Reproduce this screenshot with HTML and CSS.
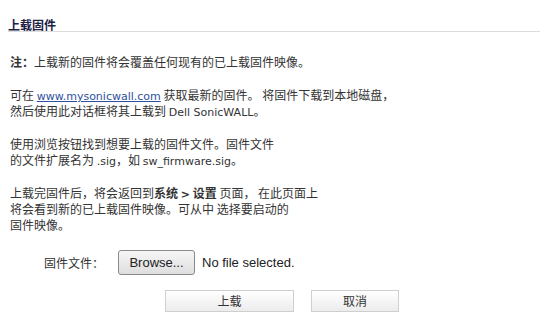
FILE: index.html
```html
<!DOCTYPE html>
<html>
<head>
<meta charset="utf-8">
<link rel="stylesheet" href="styles.css">
</head>
<body>
<div class="page">
  <div class="title">上载固件</div>
  <div class="content">
    <p class="para"><b>注：</b>上载新的固件将会覆盖任何现有的已上载固件映像。</p>
    <p class="para">可在 <a class="link en" href="#">www.mysonicwall.com</a> 获取最新的固件。 将固件下载到本地磁盘，<br>然后使用此对话框将其上载到 <span class="en">Dell SonicWALL</span>。</p>
    <p class="para">使用浏览按钮找到想要上载的固件文件。固件文件<br>的文件扩展名为 <span class="en">.sig</span>，如 <span class="en">sw_firmware.sig</span>。</p>
    <p class="para">上载完固件后，将会返回到<b>系统 <span class="en">&gt;</span> 设置</b> 页面， 在此页面上<br>将会看到新的已上载固件映像。可从中 选择要启动的<br>固件映像。</p>
  </div>
  <div class="file-row">
    <span class="file-label">固件文件：</span>
    <span class="browse">Browse...</span>
    <span class="nofile">No file selected.</span>
  </div>
  <div class="actions">
    <span class="btn btn-upload">上载</span>
    <span class="btn btn-cancel">取消</span>
  </div>
</div>
</body>
</html>
```
FILE: styles.css
```css
html, body {
  margin: 0;
  padding: 0;
  background: #fff;
}
body {
  font-family: "Noto Sans CJK SC", sans-serif;
  font-size: 12px;
  color: #333;
}
.en {
  font-family: "DejaVu Sans", sans-serif;
  font-size: 11px;
  line-height: 10px;
}
.page {
  padding: 18px 5px 0 8px;
}
.title {
  font-weight: bold;
  font-size: 12px;
  color: #1c2146;
  line-height: 13px;
  padding-bottom: 0;
  border-bottom: 1px solid #dcdcdc;
}
.content {
  padding: 22px 0 0 2px;
}
.para {
  margin: 0 0 17px 0;
  line-height: 16px;
}
.para b {
  font-weight: bold;
}
.link {
  color: #2d4f9e;
  text-decoration: underline;
}
.file-row {
  display: flex;
  align-items: center;
  margin-top: 15px;
  padding-left: 36px;
}
.file-label {
  width: 74px;
}
.browse {
  display: inline-block;
  box-sizing: border-box;
  width: 77px;
  height: 25px;
  line-height: 23px;
  text-align: center;
  font-family: "Liberation Sans", sans-serif;
  font-size: 13px;
  color: #222;
  border: 1px solid #8a8a8a;
  border-radius: 3px;
  background: linear-gradient(#f6f6f6, #dedede);
}
.nofile {
  margin-left: 7px;
  font-family: "Liberation Sans", sans-serif;
  font-size: 13px;
  color: #222;
}
.actions {
  display: flex;
  margin-top: 15px;
  padding-left: 157px;
  gap: 17px;
}
.btn {
  display: inline-block;
  box-sizing: border-box;
  height: 22px;
  line-height: 20px;
  text-align: center;
  font-size: 12px;
  color: #333;
  border: 1px solid #cfcfcf;
  background: linear-gradient(#ffffff, #ececec);
}
.btn-upload {
  width: 129px;
}
.btn-cancel {
  width: 88px;
}
```
